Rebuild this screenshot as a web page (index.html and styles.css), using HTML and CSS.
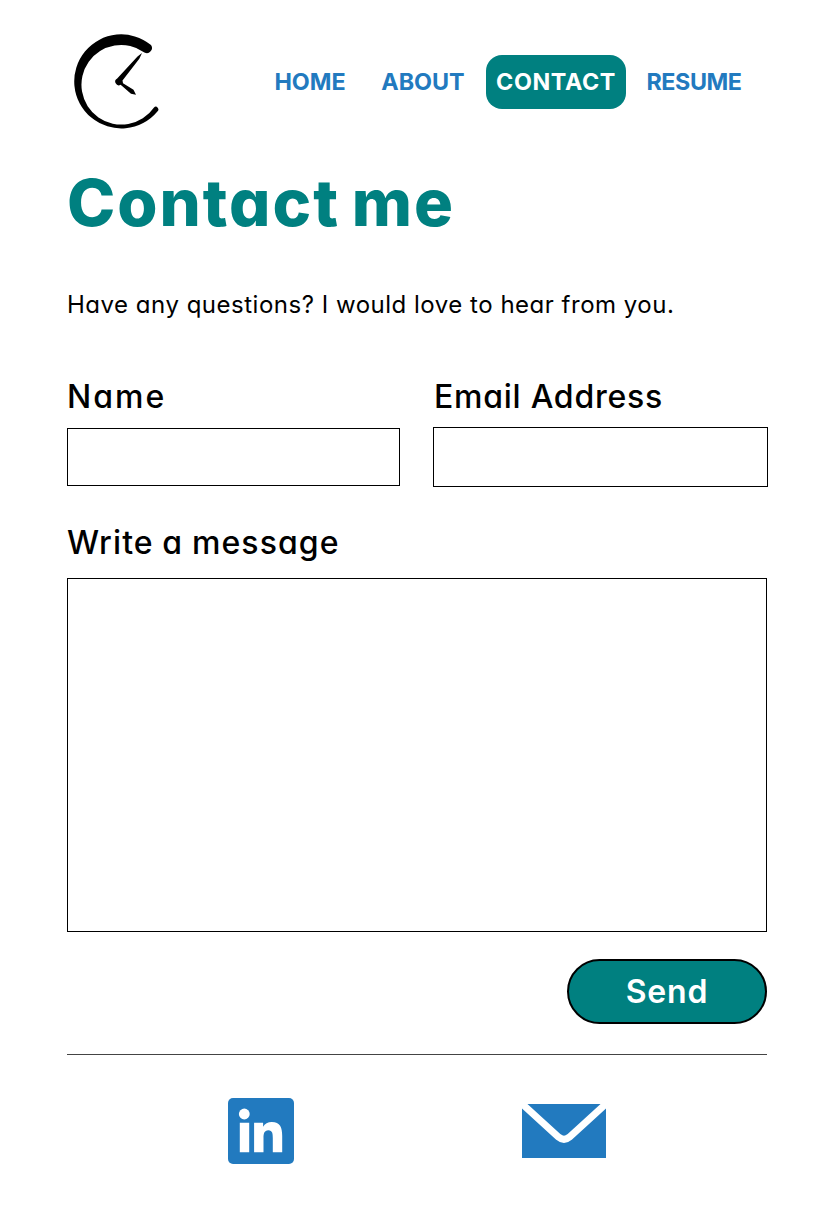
FILE: index.html
```
<!DOCTYPE html>
<html lang="en">
<head>
<meta charset="utf-8">
<title>Contact me</title>
<link rel="stylesheet" href="styles.css">
</head>
<body>
<header class="header">
  <a class="logo" href="#" aria-label="Home">
    <svg width="104" height="108" viewBox="0 0 104 108">
      <path d="M87 17A47 47 0 1 0 93.4 83.4A2.3 2.3 0 0 0 90 79.4A39.8 39.8 0 1 1 80.4 24.4A5.1 5.1 0 0 0 87 17Z"/>
      <path d="M53.2 50.4L73.5 28.4L78 25L75.3 30.7L58.5 52.4L59 55.2L69.5 61.8L72 66.7L67 65.8L56.6 56.8A3.3 3.3 0 1 1 53.2 50.4Z"/>
    </svg>
  </a>
  <nav class="nav">
    <a class="nav-link home" href="#">HOME</a>
    <a class="nav-link about" href="#">ABOUT</a>
    <a class="nav-link active" href="#">CONTACT</a>
    <a class="nav-link resume" href="#">RESUME</a>
  </nav>
</header>
<main class="main">
  <h1 class="title">Contact me</h1>
  <p class="intro">Have any questions? I would love to hear from you.</p>
  <form class="form">
    <div class="row">
      <div class="field name">
        <label class="label" for="name">Name</label>
        <input class="input" id="name" type="text">
      </div>
      <div class="field email">
        <label class="label" for="email">Email Address</label>
        <input class="input" id="email" type="email">
      </div>
    </div>
    <div class="field message">
      <label class="label" for="message">Write a message</label>
      <textarea class="textarea" id="message"></textarea>
    </div>
    <button class="send" type="button">Send</button>
  </form>
</main>
<footer class="footer">
  <a class="social linkedin" href="#" aria-label="LinkedIn">
    <svg width="66" height="66" viewBox="0 0 66 66">
      <rect class="blue" width="66" height="66" rx="5"/>
      <circle class="white" cx="16.3" cy="16" r="5.4"/>
      <path class="white" d="M11.8 24.8h9.4v29.4h-9.4zM26.1 24.8h9v4c1.6-2.8 4.8-4.7 8.7-4.7c8.4 0 10.4 5.6 10.4 13.7v16.4h-9.4V40c0-4-.3-7.7-4.4-7.7c-4.3 0-4.9 3.7-4.9 7.6V54.2h-9.4z"/>
    </svg>
  </a>
  <a class="social mail" href="#" aria-label="Email">
    <svg width="84" height="54" viewBox="0 0 84 54">
      <rect class="blue" width="84" height="54"/>
      <path class="flap" d="M-2.5 -2.5L36.5 33Q42 37.6 47.5 33L86.5 -2.5"/>
    </svg>
  </a>
</footer>
</body>
</html>
```
FILE: styles.css
```
* { box-sizing: border-box; }
body {
  margin: 0;
  padding: 28px 66px 0 67px;
  min-height: 1208px;
  background: #fff;
  color: #000;
  font-family: Inter, "Open Sans", sans-serif;
  font-feature-settings: "cv11";
}
.header { display: flex; align-items: center; height: 108px; }
.logo { display: block; margin-left: -3px; width: 104px; height: 108px; }
.logo svg, .social svg { display: block; }
.nav { display: flex; margin-left: 97px; }
.nav-link {
  display: flex;
  align-items: center;
  justify-content: center;
  height: 54px;
  padding-bottom: 2px;
  border-radius: 16px;
  color: #227abf;
  font-size: 23.3px;
  font-weight: 700;
  text-decoration: none;
  white-space: nowrap;
}
.home { width: 90px; margin-right: 16px; }
.about { width: 104px; margin-right: 11px; }
.active { width: 140px; background: #008080; color: #fff; letter-spacing: 0.6px; }
.resume { width: 116px; margin-left: 10px; letter-spacing: -0.4px; }
.title {
  margin: 35px 0 0;
  color: #008080;
  font-size: 65px;
  font-weight: 800;
  line-height: 64px;
  letter-spacing: 2px;
  word-spacing: -4.5px;
  white-space: nowrap;
}
.intro { margin: 52px 0 0; font-size: 24px; line-height: 36px; letter-spacing: 0.51px; white-space: nowrap; }
.form { display: flex; flex-direction: column; margin-top: 50px; }
.row { display: flex; justify-content: space-between; height: 120px; }
.field { display: flex; flex-direction: column; }
.name { width: 333px; }
.email { width: 335px; }
.label { font-size: 32px; font-weight: 500; line-height: 48px; white-space: nowrap; }
.name .label { letter-spacing: 2px; }
.email .label { padding-left: 1px; letter-spacing: 0.75px; }
.message .label { letter-spacing: 1.1px; word-spacing: -1px; }
.input { border: 1px solid #000; border-radius: 0; background: #fff; padding: 0 12px; width: 100%; font: inherit; }
.name .input { height: 58px; margin-top: 7px; }
.email .input { height: 60px; margin-top: 6px; }
.message { margin-top: 26px; }
.textarea { width: 700px; height: 354px; margin-top: 11px; border: 1px solid #000; padding: 12px; resize: none; font: inherit; }
.send {
  align-self: flex-end;
  width: 200px;
  height: 65px;
  margin-top: 27px;
  margin-right: 1px;
  border: 2px solid #000;
  border-radius: 32.5px;
  background: #008080;
  color: #fff;
  font: 600 32px/1 Inter, sans-serif;
  letter-spacing: 0.8px;
  padding: 0;
}
.footer { display: flex; align-items: center; width: 700px; margin-top: 30px; padding: 43px 0; border-top: 1px solid #444; }
.linkedin { margin-left: 161px; }
.mail { margin-left: 228px; }
.blue { fill: #227abf; }
.white { fill: #fff; }
.flap { fill: none; stroke: #fff; stroke-width: 7; }
```
